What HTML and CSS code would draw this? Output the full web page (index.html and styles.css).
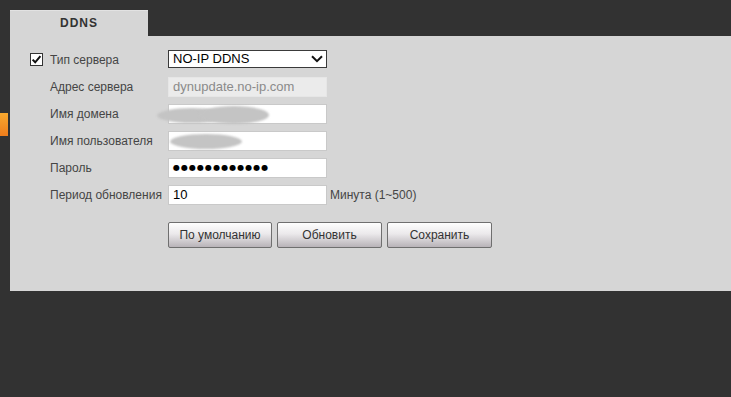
FILE: index.html
```html
<!DOCTYPE html>
<html lang="ru">
<head>
<meta charset="utf-8">
<title>DDNS</title>
<link rel="stylesheet" href="styles.css">
</head>
<body>
<div class="page">
  <div class="side"><div class="marker"></div></div>
  <div class="main">
    <div class="tabs"><div class="tab">DDNS</div></div>
    <div class="panel">
      <div class="form">
        <div class="row">
          <div class="check">
            <svg width="13" height="13" viewBox="0 0 13 13"><rect x="0.5" y="0.5" width="12" height="12" fill="#fff" stroke="#333"/><path d="M2.6 6.6 L5.2 9.3 L10.4 3.2" fill="none" stroke="#111" stroke-width="2"/></svg>
          </div>
          <div class="label">Тип сервера</div>
          <div class="field select">NO-IP DDNS
            <svg class="chev" width="12" height="8" viewBox="0 0 12 8"><path d="M1 1.2 L6 6.2 L11 1.2" fill="none" stroke="#111" stroke-width="2"/></svg>
          </div>
        </div>
        <div class="row">
          <div class="check"></div>
          <div class="label">Адрес сервера</div>
          <div class="field readonly">dynupdate.no-ip.com</div>
        </div>
        <div class="row">
          <div class="check"></div>
          <div class="label">Имя домена</div>
          <div class="field input"><span class="blob b1"></span><span class="blob b2"></span></div>
        </div>
        <div class="row">
          <div class="check"></div>
          <div class="label">Имя пользователя</div>
          <div class="field input"><span class="blob b3"></span></div>
        </div>
        <div class="row">
          <div class="check"></div>
          <div class="label">Пароль</div>
          <div class="field input pw">●●●●●●●●●●●●</div>
        </div>
        <div class="row">
          <div class="check"></div>
          <div class="label">Период обновления</div>
          <div class="field input">10</div>
          <div class="hint">Минута (1~500)</div>
        </div>
        <div class="buttons">
          <button class="btn w1">По умолчанию</button>
          <button class="btn w2">Обновить</button>
          <button class="btn w2">Сохранить</button>
        </div>
      </div>
    </div>
  </div>
</div>
</body>
</html>
```
FILE: styles.css
```css
html, body {
  margin: 0;
  padding: 0;
  background: #323232;
  font-family: "Liberation Sans", Arial, sans-serif;
}
.page {
  display: flex;
  width: 731px;
  height: 397px;
}
.side {
  width: 10px;
  flex: none;
}
.marker {
  margin-top: 113px;
  width: 8px;
  height: 23px;
  background: linear-gradient(#f8a92f, #ef7d1c);
}
.main {
  flex: 1;
  padding-top: 10px;
}
.tabs {
  display: flex;
  height: 26px;
}
.tab {
  width: 138px;
  background: #d6d6d6;
  border-top: 1px solid #e2e2e2;
  box-sizing: border-box;
  text-align: center;
  font-weight: bold;
  font-size: 12px;
  letter-spacing: 1px;
  color: #333;
  line-height: 24px;
}
.panel {
  background: #d6d6d6;
  height: 255px;
  box-sizing: border-box;
  padding: 14px 0 0 20px;
}
.form {
  display: flex;
  flex-direction: column;
}
.row {
  display: flex;
  align-items: flex-start;
  height: 27px;
}
.check {
  width: 20px;
  flex: none;
  padding-top: 3px;
}
.check svg { display: block; }
.label {
  width: 118px;
  flex: none;
  font-size: 12px;
  color: #454545;
  line-height: 20px;
  white-space: nowrap;
}
.field {
  position: relative;
  box-sizing: border-box;
  width: 159px;
  flex: none;
  height: 20px;
  font-size: 13px;
  line-height: 18px;
  padding-left: 4px;
  color: #000;
  background: #fff;
  border: 1px solid #c9c9c9;
  white-space: nowrap;
}
.select {
  height: 18px;
  line-height: 16px;
  border-color: #3a3a3a;
}
.chev {
  position: absolute;
  right: 3px;
  top: 4px;
}
.readonly {
  background: #ebebeb;
  border-color: #e6e6e6;
  color: #8a8a8a;
}
.pw {
  font-family: "DejaVu Sans", sans-serif;
  font-size: 8px;
  letter-spacing: 1.05px;
  line-height: 18px;
}
.hint {
  font-size: 12px;
  color: #454545;
  line-height: 20px;
  padding-left: 3px;
  white-space: nowrap;
}
.blob {
  position: absolute;
  background: #c4c4c4;
  border-radius: 50%;
  filter: blur(1px);
}
.b1 { left: -12px; top: 3px; width: 70px; height: 15px; }
.b2 { left: 30px; top: 1px; width: 70px; height: 18px; }
.b3 { left: 1px; top: 2px; width: 72px; height: 15px; }
.buttons {
  display: flex;
  gap: 5px;
  margin: 10px 0 0 138px;
}
.btn {
  height: 26px;
  font-family: "Liberation Sans", Arial, sans-serif;
  font-size: 12px;
  color: #333;
  border: 1px solid #6f6f6f;
  border-radius: 2px;
  background: linear-gradient(#fefefe, #ebe9eb 45%, #b8b3b8);
  padding: 0;
}
.w1 { width: 104px; }
.w2 { width: 105px; }
```
